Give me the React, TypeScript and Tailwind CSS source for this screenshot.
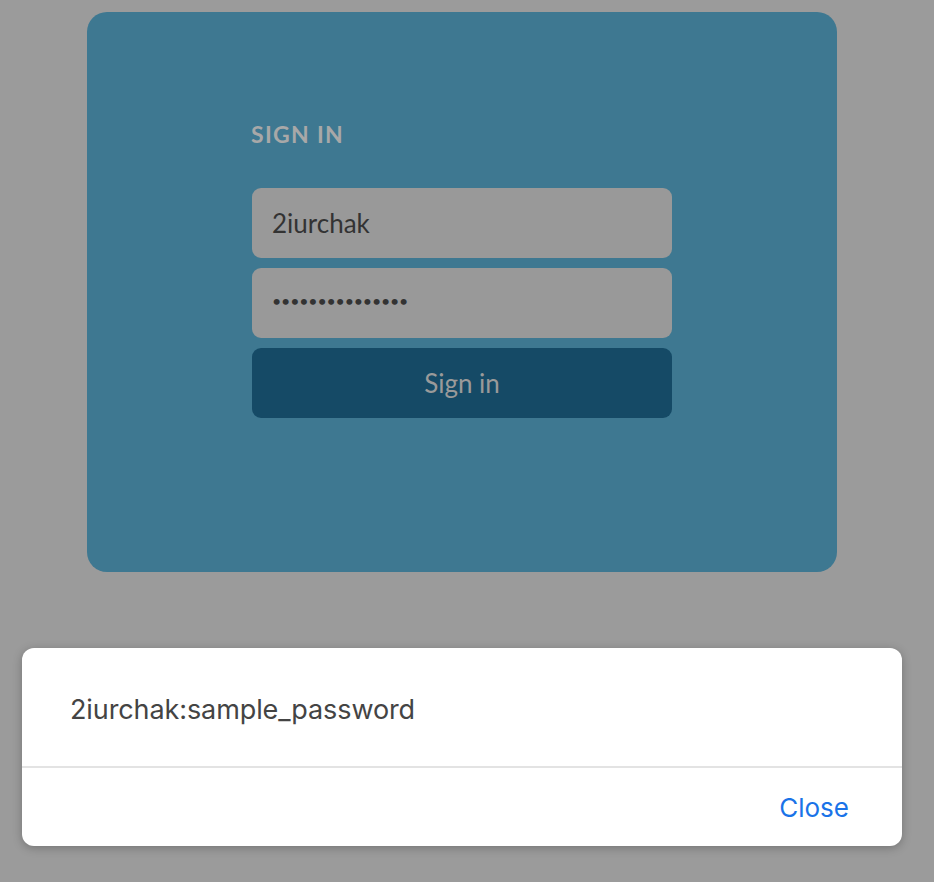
export default function App() {
  return (
    <div className="relative h-[882px] w-[934px] overflow-hidden bg-[#9b9b9b]">
      <div className="pl-[87px] pt-[12px]">
        <div className="flex h-[560px] w-[750px] justify-center rounded-[20px] bg-[#3e7891]">
          <div className="w-[420px] pt-[108px] font-['Lato',sans-serif]">
            <h1 className="-ml-[1px] text-[23px] leading-[28px] font-bold tracking-[1.3px] text-[#a8a8a8]">
              SIGN IN
            </h1>
            <div className="mt-[40px] flex flex-col gap-[10px]">
              <div className="flex h-[70px] items-center rounded-[9px] bg-[#999999] px-[20px] text-[26px] text-[#333333]">
                2iurchak
              </div>
              <div className="flex h-[70px] items-center rounded-[9px] bg-[#999999] px-[20px] text-[16px] tracking-[-0.2px] text-[#333333]">
                <span className="-mt-[4px]">•••••••••••••••</span>
              </div>
              <div className="flex h-[70px] items-center justify-center rounded-[9px] bg-[#154a66] text-[26px] text-[#9a9a9a]">
                Sign in
              </div>
            </div>
          </div>
        </div>
      </div>

      <div className="absolute left-[22px] top-[648px] w-[880px] rounded-[12px] bg-white font-['Inter',sans-serif] shadow-[0_2px_10px_rgba(0,0,0,0.25)]">
        <div className="flex h-[118px] items-center px-[48px] pt-[6px] text-[27px] tracking-[-0.1px] text-[#444444]">
          2iurchak:sample_password
        </div>
        <div className="h-[2px] bg-[#e3e3e3]" />
        <div className="flex h-[78px] items-center justify-end px-[53px] text-[26px] text-[#1a73e8]">
          Close
        </div>
      </div>
    </div>
  );
}
